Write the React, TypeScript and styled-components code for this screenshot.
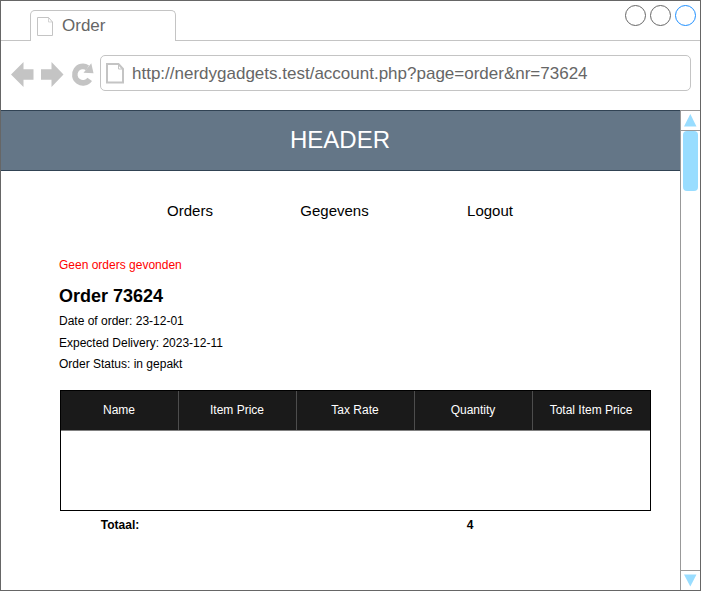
import React from "react";
import styled, { createGlobalStyle } from "styled-components";

const GlobalStyle = createGlobalStyle`
  * { box-sizing: border-box; }
  body {
    margin: 0;
    background: #fff;
    font-family: "Liberation Sans", Helvetica, Arial, sans-serif;
  }
`;

const BrowserWindow = styled.div`
  width: 701px;
  height: 591px;
  display: flex;
  flex-direction: column;
  border: 1px solid #666;
  overflow: hidden;
`;

const TabStrip = styled.header`
  display: flex;
  flex: 0 0 40px;
  align-items: flex-end;
`;

const StripLine = styled.div<{ $width?: number }>`
  flex: ${(p) => (p.$width ? `0 0 ${p.$width}px` : "1")};
  height: 40px;
  border-bottom: 1px solid #c4c4c4;
`;

const Tab = styled.div`
  display: flex;
  width: 146px;
  height: 31px;
  padding: 6px 0 0 6px;
  gap: 8px;
  border: 1px solid #c4c4c4;
  border-bottom: 0;
  border-radius: 5px 5px 0 0;
`;

const TabTitle = styled.span`
  font-size: 17px;
  line-height: 19px;
  margin-top: -1px;
  color: #666;
`;

const WindowControls = styled(StripLine)`
  display: flex;
  justify-content: flex-end;
  gap: 3px;
  padding: 3px 3px 0 0;
`;

const Toolbar = styled.div`
  display: flex;
  flex: 0 0 69px;
  align-items: flex-start;
  padding: 14px 9px 0 10px;
`;

const NavIcons = styled.div`
  display: flex;
  width: 89px;
  padding-top: 7px;
`;

const AddressBar = styled.div`
  display: flex;
  flex: 1;
  height: 36px;
  padding: 7px 0 0 5px;
  gap: 7px;
  border: 1px solid #c4c4c4;
  border-radius: 5px;
`;

const Url = styled.span`
  font-size: 17px;
  line-height: 22px;
  white-space: nowrap;
  color: #666;
`;

const Viewport = styled.div`
  display: flex;
  flex: 1;
  min-height: 0;
`;

const Page = styled.main`
  flex: 1;
`;

const PageHeader = styled.h1`
  height: 61px;
  margin: 0 0 0 -1px;
  padding-right: 1px;
  border: 1px solid #314354;
  border-right: 0;
  background: #647687;
  color: #fff;
  font-size: 24px;
  font-weight: 400;
  line-height: 58px;
  text-align: center;
`;

const Nav = styled.nav`
  display: grid;
  grid-template-columns: 132px 157px 154px;
  margin: 31px 0 0 123px;
  font-size: 15px;
  line-height: 18px;
  text-align: center;
`;

const Details = styled.section`
  margin: 37px 0 0 58px;
  font-size: 12px;
`;

const Notice = styled.p`
  margin: 0;
  line-height: 16px;
  color: #f00;
`;

const OrderTitle = styled.h2`
  margin: 12px 0 4px;
  font-size: 18px;
  line-height: 22px;
`;

const Detail = styled.p`
  margin: 0;
  line-height: 21.5px;
`;

const OrderTable = styled.div`
  width: 591px;
  height: 121px;
  margin: 14.5px 0 0 59px;
  border: 1px solid #000;
`;

const HeadRow = styled.div`
  display: grid;
  grid-template-columns: 118px 118px 118px 118px 117px;
  height: 40px;
  border-bottom: 1px solid #808080;
  background: #1a1a1a;
`;

const HeadCell = styled.div`
  padding-right: 1px;
  border-right: 1px solid #4d4d4d;
  color: #fff;
  font-size: 12px;
  line-height: 38px;
  text-align: center;

  &:last-child { border-right: 0; }
`;

const Totals = styled.div`
  display: grid;
  grid-template-columns: repeat(5, 118px);
  margin: 6px 0 0 59px;
  font-size: 12px;
  font-weight: 700;
  line-height: 16px;
  text-align: center;
`;

const TotalCell = styled.span<{ $column: number }>`
  grid-column: ${(p) => p.$column};
  ${(p) => (p.$column === 4 ? "padding-right: 6px;" : "padding-left: 2px;")}
`;

const Scrollbar = styled.aside`
  display: flex;
  flex: 0 0 21px;
  flex-direction: column;
  margin-right: -1px;
  border: 1px solid #999;
  border-bottom: 0;
`;

const ScrollButton = styled.div`
  display: flex;
  flex: 0 0 19px;
`;

const Track = styled.div`
  flex: 1;
  border: solid #999;
  border-width: 1px 0;
`;

const Thumb = styled.div`
  width: 15px;
  height: 60px;
  margin: 0 0 0 2px;
  border-radius: 4px;
  background: #9df;
`;

const PageIcon = ({ bold = false }: { bold?: boolean }) =>
  bold ? (
    <svg width="19" height="21" viewBox="0 0 19 21" fill="none" stroke="#c4c4c4" strokeWidth="2">
      <path d="M1 1h11.500l4.500 5v13.500H1z" />
      <path d="M12.500 1v5H17" strokeWidth="1" />
    </svg>
  ) : (
    <svg width="17" height="20" viewBox="0 0 17 20" fill="none" stroke="#c4c4c4">
      <path d="M.5.5h11l4 4.500v13.500H.5z" />
      <path d="M11.500.5V5h4" strokeWidth=".7" />
    </svg>
  );

const columns = ["Name", "Item Price", "Tax Rate", "Quantity", "Total Item Price"];
const controls = ["#666", "#666", "#1e8fff"];

export default function App() {
  return (
    <>
      <GlobalStyle />
      <BrowserWindow>
        <TabStrip>
          <StripLine $width={29} />
          <Tab>
            <PageIcon />
            <TabTitle>Order</TabTitle>
          </Tab>
          <WindowControls>
            {controls.map((color, i) => (
              <svg key={i} width="22" height="22" fill="none" stroke={color}>
                <circle cx="10.500" cy="11.500" r="10" />
              </svg>
            ))}
          </WindowControls>
        </TabStrip>
        <Toolbar>
          <NavIcons>
            <svg width="85" height="26" viewBox="0 0 85 26" fill="#c4c4c4">
              <path d="M0 12.500 12.500 0v7.300H22.500v10.400H12.500V25z" />
              <path d="M52.500 12.500 40.500 0v7.300H30v10.400h10.500V25z" />
              <path
                d="M76.500 5.800A8.200 8.200 0 1 0 78.700 17.300"
                fill="none"
                stroke="#c4c4c4"
                strokeWidth="5.600"
              />
              <path d="M80.300 1.200 82.500 11.300 72.500 10.700z" />
            </svg>
          </NavIcons>
          <AddressBar>
            <PageIcon bold />
            <Url>http://nerdygadgets.test/account.php?page=order&amp;nr=73624</Url>
          </AddressBar>
        </Toolbar>
        <Viewport>
          <Page>
            <PageHeader>HEADER</PageHeader>
            <Nav>
              <span>Orders</span>
              <span>Gegevens</span>
              <span>Logout</span>
            </Nav>
            <Details>
              <Notice>Geen orders gevonden</Notice>
              <OrderTitle>Order 73624</OrderTitle>
              <Detail>Date of order: 23-12-01</Detail>
              <Detail>Expected Delivery: 2023-12-11</Detail>
              <Detail>Order Status: in gepakt</Detail>
            </Details>
            <OrderTable>
              <HeadRow>
                {columns.map((label) => (
                  <HeadCell key={label}>{label}</HeadCell>
                ))}
              </HeadRow>
            </OrderTable>
            <Totals>
              <TotalCell $column={1}>Totaal:</TotalCell>
              <TotalCell $column={4}>4</TotalCell>
            </Totals>
          </Page>
          <Scrollbar>
            <ScrollButton>
              <svg width="19" height="19" fill="#9df">
                <path d="M9.300 3 15.500 15.500H3z" />
              </svg>
            </ScrollButton>
            <Track>
              <Thumb />
            </Track>
            <ScrollButton>
              <svg width="19" height="19" fill="#9df">
                <path d="M9.300 15.500 15.500 3.500H3z" />
              </svg>
            </ScrollButton>
          </Scrollbar>
        </Viewport>
      </BrowserWindow>
    </>
  );
}
